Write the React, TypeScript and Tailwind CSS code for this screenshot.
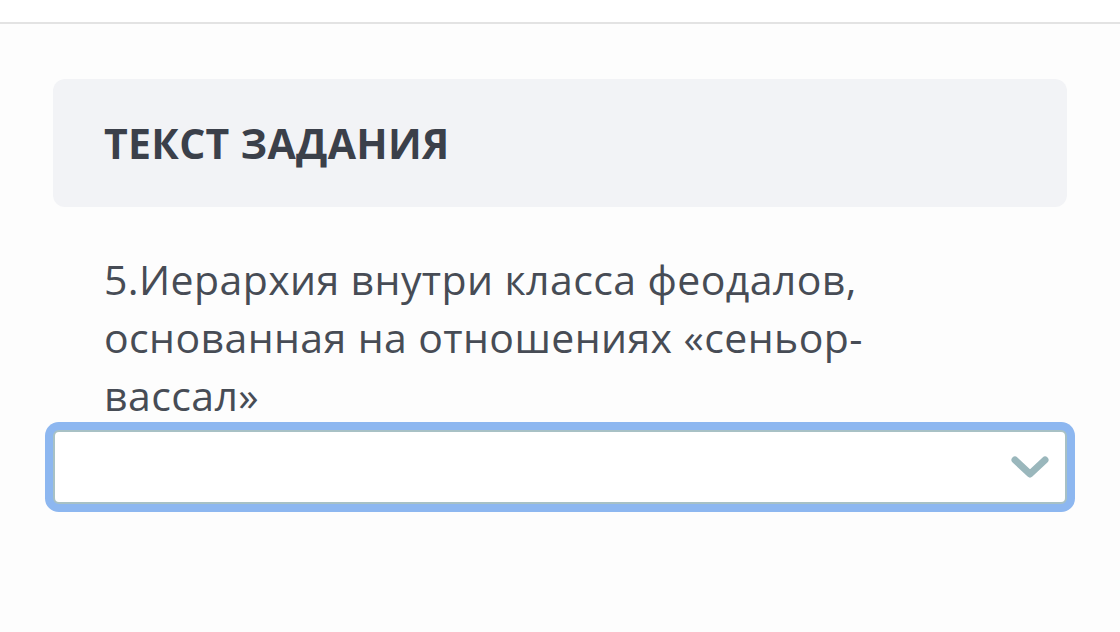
export default function App() {
  return (
    <div className="min-h-[632px] w-full bg-[#fdfdfd] font-['Open_Sans',sans-serif]">
      {/* top bar edge */}
      <div className="h-[24px] border-b-2 border-[#e3e3e3] bg-white" />

      <main className="px-[53px] pt-[55px]">
        <section className="flex h-[128px] items-center rounded-xl bg-[#f2f3f6] pl-[51px]">
          <h2 className="text-[41px] font-bold uppercase leading-none tracking-[0.3px] text-[#3b404a]">
            Текст задания
          </h2>
        </section>

        <p className="mt-[43px] pl-[51px] pr-[150px] text-[41px] leading-[58px] tracking-[0.4px] text-[#474c55]">
          5.Иерархия внутри класса феодалов, основанная на отношениях «сеньор-вассал»
        </p>

        <div className="relative mt-[6px] h-[74px] rounded-md border-2 border-[#a8c1c5] bg-white shadow-[0_0_0_8px_#8db7f0]">
          <select className="h-full w-full appearance-none bg-transparent outline-none" defaultValue="">
            <option value="" />
          </select>
          <svg
            className="pointer-events-none absolute right-[16px] top-[23px]"
            width="38"
            height="25"
            viewBox="0 0 38 25"
            fill="none"
          >
            <path d="M4 5 L19 19 L34 5" stroke="#9ab7bc" strokeWidth="7" strokeLinecap="round" strokeLinejoin="round" />
          </svg>
        </div>
      </main>
    </div>
  );
}
